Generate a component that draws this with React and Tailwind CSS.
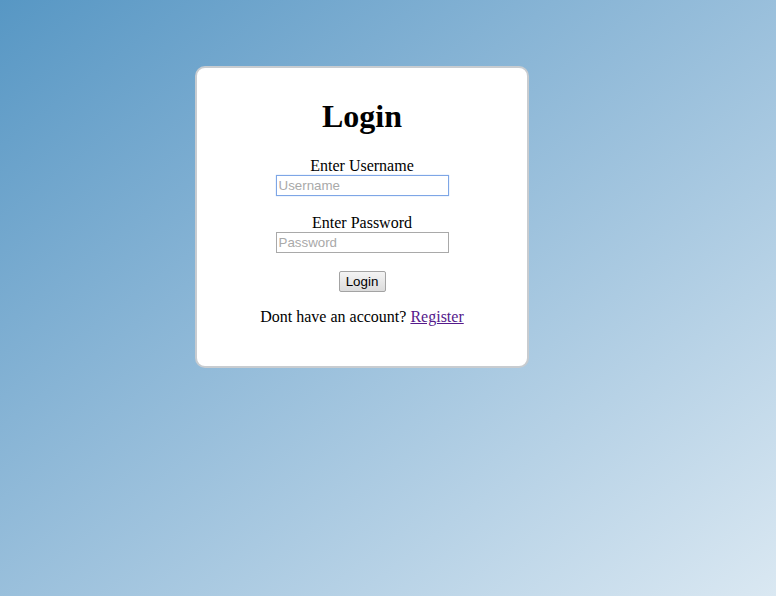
import { useState } from "react";

const App = () => {
  const [username, setUsername] = useState("");
  const [password, setPassword] = useState("");

  return (
    <div className="min-h-screen w-full bg-gradient-to-br from-[#5797c4] to-[#dae8f2] font-['Liberation_Serif',serif] text-black">
      <div className="pt-[66px] pl-[195px]">
        <div className="w-[334px] h-[302px] bg-white border-2 border-[#c8ccd0] rounded-[10px] flex flex-col items-center">
          <h1 className="mt-[30px] text-[32px] leading-[37px] font-bold">Login</h1>

          <label className="mt-[22px] text-base leading-[18px]">Enter Username</label>
          <input
            autoFocus
            type="text"
            placeholder="Username"
            value={username}
            onChange={(e) => setUsername(e.target.value)}
            className="w-[173px] h-[21px] px-[2px] border border-[#a9a9a9] text-[13.33px] font-['Liberation_Sans',sans-serif] placeholder:text-[#a9a9a9] outline-none focus:border-[#7ea6e6] focus:shadow-[0_0_1px_#9fc0f0]"
          />

          <label className="mt-[18px] text-base leading-[18px]">Enter Password</label>
          <input
            type="password"
            placeholder="Password"
            value={password}
            onChange={(e) => setPassword(e.target.value)}
            className="w-[173px] h-[21px] px-[2px] border border-[#a9a9a9] text-[13.33px] font-['Liberation_Sans',sans-serif] placeholder:text-[#a9a9a9] outline-none focus:border-[#7ea6e6]"
          />

          <button className="mt-[18px] w-[47px] h-[21px] border border-[#a3a3a3] rounded-[2px] bg-gradient-to-b from-[#f4f4f4] to-[#dcdcdc] text-[13.33px] font-['Liberation_Sans',sans-serif]">
            Login
          </button>

          <p className="mt-[16px] text-base leading-[18px]">
            Dont have an account?{" "}
            <a href="#" className="text-[#551a8b] underline">Register</a>
          </p>
        </div>
      </div>
    </div>
  );
};

export default App;
